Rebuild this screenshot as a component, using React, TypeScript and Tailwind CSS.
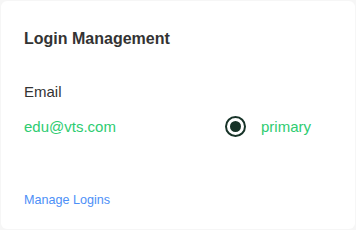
import React from "react";

export default function App() {
  return (
    <div className="w-[356px] h-[230px] bg-[#f6f6f6] p-px" style={{ fontFamily: '"Liberation Sans", Arial, sans-serif' }}>
      <div className="h-full bg-white rounded-[6px] pl-[23px] pt-[28px] flex flex-col">
        <h2 className="text-[16px] leading-[20px] font-bold text-[#333333]">Login Management</h2>
        <div className="mt-[33px] text-[15px] leading-[20px] text-[#333333]">Email</div>
        <div className="mt-[14px] flex items-center h-[21px]">
          <span className="w-[201px] text-[15px] leading-[20px] text-[#2ecc71]">edu@vts.com</span>
          <span className="w-[21px] h-[21px] rounded-full border-[2.5px] border-[#173328] flex items-center justify-center">
            <span className="w-[11px] h-[11px] rounded-full bg-[#173328]" />
          </span>
          <span className="ml-[15px] text-[15px] leading-[20px] text-[#2ecc71]">primary</span>
        </div>
        <a href="#" className="mt-[55px] self-start text-[12.6px] leading-[16px] text-[#4d8ff7]">Manage Logins</a>
      </div>
    </div>
  );
}
